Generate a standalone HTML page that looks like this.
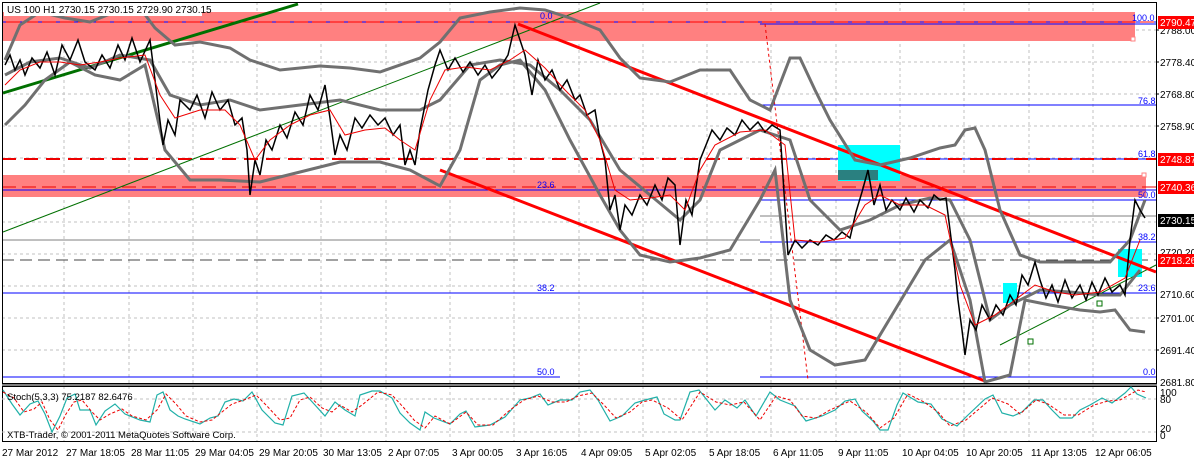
<!DOCTYPE html>
<html><head><meta charset="utf-8"><style>
html,body{margin:0;padding:0;background:#fff;}
svg{display:block;font-family:"Liberation Sans",sans-serif;}
</style></head><body>
<svg width="1194" height="461" viewBox="0 0 1194 461" xmlns="http://www.w3.org/2000/svg">
<rect width="1194" height="461" fill="#fff"/>
<g stroke="#c0c0c0" stroke-dasharray="3,3" stroke-width="1">
<line x1="2" y1="30" x2="1156" y2="30"/><line x1="2" y1="62" x2="1156" y2="62"/><line x1="2" y1="94" x2="1156" y2="94"/><line x1="2" y1="126" x2="1156" y2="126"/><line x1="2" y1="158" x2="1156" y2="158"/><line x1="2" y1="190" x2="1156" y2="190"/><line x1="2" y1="222" x2="1156" y2="222"/><line x1="2" y1="254" x2="1156" y2="254"/><line x1="2" y1="286" x2="1156" y2="286"/><line x1="2" y1="318" x2="1156" y2="318"/><line x1="2" y1="350" x2="1156" y2="350"/>
<line x1="64" y1="2" x2="64" y2="441"/><line x1="129" y1="2" x2="129" y2="441"/><line x1="193" y1="2" x2="193" y2="441"/><line x1="257" y1="2" x2="257" y2="441"/><line x1="321" y1="2" x2="321" y2="441"/><line x1="386" y1="2" x2="386" y2="441"/><line x1="450" y1="2" x2="450" y2="441"/><line x1="514" y1="2" x2="514" y2="441"/><line x1="579" y1="2" x2="579" y2="441"/><line x1="643" y1="2" x2="643" y2="441"/><line x1="707" y1="2" x2="707" y2="441"/><line x1="771" y1="2" x2="771" y2="441"/><line x1="836" y1="2" x2="836" y2="441"/><line x1="900" y1="2" x2="900" y2="441"/><line x1="964" y1="2" x2="964" y2="441"/><line x1="1029" y1="2" x2="1029" y2="441"/><line x1="1093" y1="2" x2="1093" y2="441"/>
</g>
<rect x="2" y="12" width="1133" height="29" fill="#ff8080"/>
<rect x="2" y="175" width="1144" height="22" fill="#ff8080"/>
<rect x="1131" y="37" width="4" height="4" fill="#fff" stroke="#ff8080"/>
<rect x="1142" y="173" width="4" height="4" fill="#fff" stroke="#ff8080"/>
<line x1="2" y1="22" x2="1156" y2="22" stroke="#f00" stroke-width="1"/>
<line x1="2" y1="22" x2="1156" y2="22" stroke="#00f" stroke-dasharray="4,14"/>
<line x1="760" y1="24" x2="1156" y2="24" stroke="#00f"/>
<line x1="760" y1="105" x2="1156" y2="105" stroke="#00f"/>
<line x1="760" y1="159" x2="1156" y2="159" stroke="#00f"/>
<line x1="2" y1="159" x2="1156" y2="159" stroke="#e00" stroke-width="2" stroke-dasharray="14,8"/>
<line x1="2" y1="187" x2="1156" y2="187" stroke="#e00" stroke-width="1" stroke-dasharray="14,6"/>
<line x1="2" y1="190" x2="1156" y2="190" stroke="#00f"/>
<line x1="760" y1="200" x2="1156" y2="200" stroke="#00f"/>
<line x1="760" y1="242" x2="1156" y2="242" stroke="#00f"/>
<line x1="2" y1="260" x2="1156" y2="260" stroke="#444" stroke-width="1" stroke-dasharray="12,6"/>
<line x1="2" y1="293" x2="1156" y2="293" stroke="#00f"/>
<line x1="2" y1="377" x2="560" y2="377" stroke="#00f"/>
<line x1="760" y1="377" x2="1156" y2="377" stroke="#00f"/>
<line x1="2" y1="240" x2="760" y2="240" stroke="#000" stroke-width="0.5"/>
<line x1="760" y1="216" x2="1156" y2="216" stroke="#000" stroke-width="0.5"/>
<line x1="765" y1="24" x2="808" y2="380" stroke="#e00" stroke-dasharray="3,3"/>
<rect x="838" y="145" width="62" height="36" fill="#00ffff"/>
<rect x="838" y="170" width="40" height="10" fill="#2a8080"/>
<rect x="1003" y="283" width="14" height="20" fill="#00ffff"/>
<rect x="1118" y="249" width="24" height="28" fill="#00ffff"/>
<line x1="3" y1="93" x2="298" y2="4" stroke="#007000" stroke-width="3"/>
<line x1="3" y1="232" x2="600" y2="3" stroke="#007000" stroke-width="1"/>
<line x1="1000" y1="345" x2="1156" y2="265" stroke="#007000" stroke-width="1"/>
<line x1="518" y1="24" x2="1156" y2="272" stroke="#f00" stroke-width="3"/>
<line x1="440" y1="170" x2="985" y2="381" stroke="#f00" stroke-width="3"/>
<g fill="none" stroke="#707070" stroke-width="3">
<polyline points="5,60 20,25 40,12 65,18 90,22 115,12 140,8 155,28 175,45 200,42 230,48 250,60 280,70 320,66 350,68 380,72 420,58 440,42 460,18 490,12 520,8 545,10 570,18 600,30 620,58 640,78 670,82 700,70 730,70 750,100 770,110 790,58 800,58 815,90 830,120 855,160 880,165 910,158 940,148 955,145 965,130 975,128 985,150 1000,210 1020,255 1040,262 1080,262 1110,262 1130,240 1145,200"/>
<polyline points="5,125 25,105 45,80 70,62 95,75 120,80 145,65 165,150 190,180 220,180 260,182 300,172 340,162 380,162 410,170 440,186 460,150 480,80 500,65 520,60 545,90 570,140 600,195 620,230 640,255 670,262 700,258 730,250 760,200 775,170 790,300 810,350 835,365 865,360 895,310 925,260 950,240 970,300 985,382 1010,375 1025,300 1050,305 1080,310 1100,312 1115,310 1130,330 1145,332"/>
<polyline points="5,75 30,62 60,58 90,68 120,55 150,60 170,95 200,105 230,100 260,110 300,105 340,100 380,110 420,110 440,100 470,65 500,60 530,65 560,90 590,120 620,170 650,195 680,220 700,200 720,150 760,130 790,140 810,200 840,230 870,220 900,205 930,198 950,200 970,240 990,320 1010,305 1040,290 1070,292 1100,295 1120,295 1140,270"/>
</g>
<g fill="none">
<polyline stroke="#000" stroke-width="1.5" points="5,65 10,55 15,70 20,60 25,75 32,58 40,68 47,52 55,75 62,45 70,60 78,40 85,62 95,70 102,55 110,68 118,45 125,60 132,38 140,62 150,40 155,80 158,105 163,145 168,120 175,135 180,100 190,110 197,95 205,118 212,92 220,110 228,100 235,125 242,118 247,150 250,195 255,160 260,175 266,140 272,150 280,125 287,138 295,112 303,125 310,95 318,110 325,85 330,118 335,155 340,135 347,150 355,118 362,128 370,115 378,125 385,118 393,135 400,125 405,165 410,150 415,165 420,130 428,90 435,65 440,50 448,70 455,58 463,72 470,62 478,75 485,65 492,78 500,68 508,55 515,25 520,40 525,55 532,95 538,60 545,80 552,70 560,90 567,80 575,100 580,95 587,115 595,110 600,140 605,160 610,210 615,195 620,230 625,205 632,215 640,195 647,205 655,185 662,200 668,178 675,185 680,245 686,200 692,215 700,160 706,145 712,130 720,140 727,128 735,135 742,120 750,130 758,122 765,132 772,125 780,130 788,255 795,240 802,248 810,240 818,245 826,235 834,240 842,232 850,238 856,212 862,192 868,170 874,205 880,185 886,210 892,200 900,210 906,198 914,212 920,200 928,208 934,195 940,200 946,198 950,230 955,270 958,300 962,330 965,355 970,320 976,330 982,305 990,320 996,305 1003,315 1010,295 1016,305 1022,275 1028,285 1035,262 1040,280 1046,298 1052,285 1058,302 1065,280 1072,298 1080,285 1086,300 1092,282 1098,295 1105,278 1112,292 1120,285 1125,295 1130,240 1135,200 1140,210 1145,218"/>
<polyline stroke="#e00" stroke-width="1" points="5,85 20,70 40,62 60,62 80,65 100,62 120,58 145,55 160,95 175,118 200,110 225,110 240,125 255,160 270,140 290,125 310,115 330,110 345,135 365,130 385,128 400,140 415,150 430,100 445,70 465,67 490,70 510,60 525,50 545,68 565,90 585,110 600,140 615,190 630,200 650,198 670,195 685,210 700,170 715,145 740,132 765,130 785,145 795,240 820,242 845,238 865,205 880,195 900,205 925,205 945,215 960,285 975,325 995,315 1015,300 1035,285 1055,292 1075,295 1100,292 1125,278 1140,240"/>
</g>
<g fill="#fff" stroke="#007000"><rect x="1028" y="339" width="5" height="5"/><rect x="1097" y="301" width="5" height="5"/></g>
<g font-size="9" fill="#00f">
<text x="540" y="19">0.0</text><text x="1132" y="21">100.0</text><text x="1138" y="104">76.8</text><text x="1138" y="157">61.8</text>
<text x="537" y="188">23.6</text><text x="1138" y="198">50.0</text><text x="1138" y="240">38.2</text>
<text x="537" y="291">38.2</text><text x="1138" y="291">23.6</text><text x="537" y="375">50.0</text><text x="1143" y="375">0.0</text>
</g>
<rect x="4" y="3" width="198" height="13" fill="#fff"/>
<text x="7" y="13" font-size="10" fill="#000">US 100 H1  2730.15 2730.15 2729.90 2730.15</text>
<rect x="2.5" y="2.5" width="1154" height="381" fill="none" stroke="#000"/>
<rect x="2.5" y="386.5" width="1154" height="55" fill="none" stroke="#000"/>
<line x1="2" y1="385" x2="1157" y2="385" stroke="#000"/>
<g stroke="#c0c0c0" stroke-dasharray="3,3"><line x1="2" y1="399" x2="1156" y2="399"/><line x1="2" y1="432" x2="1156" y2="432"/></g>
<polyline fill="none" stroke="#20b0a8" stroke-width="1.2" points="3,390 12,404 20,415 30,404 38,401 45,414 52,432 60,416 67,398 75,394 80,410 90,410 96,425 105,411 115,404 125,414 140,420 150,422 157,395 163,392 170,410 178,416 185,419 200,424 210,418 218,416 225,402 234,399 243,401 252,392 262,410 275,423 283,425 292,396 304,393 315,405 325,416 335,402 345,410 355,416 360,395 372,391 380,391 392,398 400,413 410,423 420,430 425,412 434,418 450,424 460,414 466,411 475,427 490,425 505,417 520,400 530,398 540,394 548,405 560,400 572,400 580,392 590,390 598,400 610,421 622,416 635,403 645,400 657,397 664,414 675,420 680,420 690,392 699,390 715,410 725,400 737,408 745,400 756,416 770,392 780,400 795,406 806,421 822,416 835,410 845,401 855,399 862,411 873,421 880,430 888,430 897,405 903,393 918,402 931,404 942,419 957,426 967,416 985,399 993,395 1002,413 1013,416 1022,412 1034,400 1043,400 1052,410 1060,418 1072,418 1080,410 1090,405 1102,398 1112,403 1125,393 1131,387 1137,394 1146,398"/>
<polyline fill="none" stroke="#e00" stroke-width="1" stroke-dasharray="3,2" points="3,392 14,398 24,412 34,409 42,402 50,420 58,430 66,414 74,402 82,400 92,412 100,420 110,414 122,409 132,416 146,420 157,410 166,394 176,404 186,416 200,422 212,420 222,412 232,404 244,400 256,395 266,405 280,420 290,418 300,400 310,397 322,408 332,412 340,405 352,412 362,405 378,392 392,395 404,408 414,420 425,428 435,416 450,424 466,412 478,425 493,425 510,410 524,400 538,396 552,402 566,402 578,396 592,393 604,405 616,418 630,412 642,402 652,400 668,408 682,420 700,392 716,402 730,405 744,402 760,420 776,396 790,400 802,416 816,418 830,410 850,401 866,412 880,428 894,418 908,394 924,402 938,412 950,426 966,420 992,398 1008,404 1020,414 1036,400 1048,404 1064,415 1078,415 1094,405 1108,401 1120,400 1138,390 1146,392"/>
<text x="7" y="400" font-size="9.5" fill="#000">Stoch(5,3,3) 75.2187 82.6476</text>
<text x="7" y="438" font-size="9.5" fill="#000">XTB-Trader, © 2001-2011 MetaQuotes Software Corp.</text>
<g font-size="10" fill="#000">
<text x="1160" y="34">2788.00</text><text x="1160" y="66">2778.40</text><text x="1160" y="98">2768.80</text><text x="1160" y="130">2758.90</text><text x="1160" y="256">2720.20</text><text x="1160" y="298">2710.60</text><text x="1160" y="322">2701.00</text><text x="1160" y="354">2691.40</text><text x="1160" y="386">2681.80</text>
<text x="1160" y="396">100</text><text x="1160" y="403">80</text><text x="1160" y="432">20</text><text x="1160" y="439">0</text>
</g>
<g stroke="#000"><line x1="1156" y1="30" x2="1159" y2="30"/><line x1="1156" y1="62" x2="1159" y2="62"/><line x1="1156" y1="94" x2="1159" y2="94"/><line x1="1156" y1="126" x2="1159" y2="126"/><line x1="1156" y1="318" x2="1159" y2="318"/><line x1="1156" y1="350" x2="1159" y2="350"/></g>
<rect x="1158" y="16" width="36" height="13" fill="#f00"/><text x="1160" y="26" font-size="10" fill="#fff">2790.47</text>
<rect x="1158" y="153" width="36" height="13" fill="#f00"/><text x="1160" y="163" font-size="10" fill="#fff">2748.87</text>
<rect x="1158" y="181" width="36" height="13" fill="#f00"/><text x="1160" y="191" font-size="10" fill="#fff">2740.36</text>
<rect x="1158" y="214" width="36" height="13" fill="#000"/><text x="1160" y="224" font-size="10" fill="#fff">2730.15</text>
<rect x="1158" y="254" width="36" height="13" fill="#f00"/><text x="1160" y="264" font-size="10" fill="#fff">2718.26</text>
<g font-size="10" fill="#000">
<text x="2" y="456">27 Mar 2012</text><text x="66" y="456">27 Mar 18:05</text><text x="131" y="456">28 Mar 11:05</text><text x="195" y="456">29 Mar 04:05</text><text x="259" y="456">29 Mar 20:05</text><text x="323" y="456">30 Mar 13:05</text><text x="388" y="456">2 Apr 07:05</text><text x="452" y="456">3 Apr 00:05</text><text x="516" y="456">3 Apr 16:05</text><text x="581" y="456">4 Apr 09:05</text><text x="645" y="456">5 Apr 02:05</text><text x="709" y="456">5 Apr 18:05</text><text x="773" y="456">6 Apr 11:05</text><text x="838" y="456">9 Apr 11:05</text><text x="902" y="456">10 Apr 04:05</text><text x="966" y="456">10 Apr 20:05</text><text x="1031" y="456">11 Apr 13:05</text><text x="1095" y="456">12 Apr 06:05</text>
</g>
</svg>
</body></html>
